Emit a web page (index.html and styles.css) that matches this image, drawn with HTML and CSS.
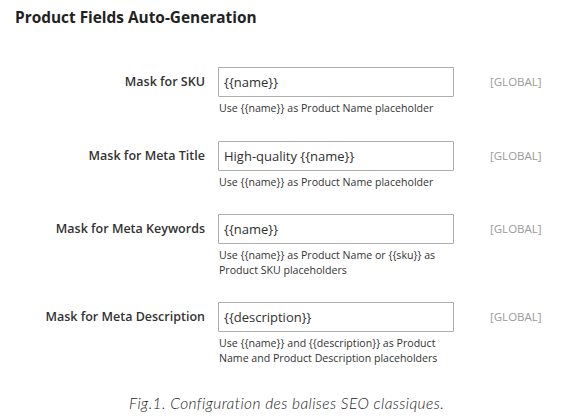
FILE: index.html
```html
<!DOCTYPE html>
<html lang="en">
<head>
<meta charset="UTF-8" />
<meta name="viewport" content="width=device-width, initial-scale=1" />
<title>Product Fields Auto-Generation</title>
<link rel="stylesheet" href="styles.css">
</head>
<body>

<section class="config-panel">
  <h2 class="panel-title">Product Fields Auto-Generation</h2>

  <div class="field-list">
    <div class="field">
      <label class="field-label" for="mask-sku">Mask for SKU</label>
      <div class="field-control">
        <input type="text" id="mask-sku" value="{{name}}" />
        <p class="field-note">Use {{name}} as Product Name placeholder</p>
      </div>
      <span class="field-scope">[GLOBAL]</span>
    </div>

    <div class="field">
      <label class="field-label" for="mask-title">Mask for Meta Title</label>
      <div class="field-control">
        <input type="text" id="mask-title" value="High-quality {{name}}" />
        <p class="field-note">Use {{name}} as Product Name placeholder</p>
      </div>
      <span class="field-scope">[GLOBAL]</span>
    </div>

    <div class="field">
      <label class="field-label" for="mask-keywords">Mask for Meta Keywords</label>
      <div class="field-control">
        <input type="text" id="mask-keywords" value="{{name}}" />
        <p class="field-note">Use {{name}} as Product Name or {{sku}} as Product SKU placeholders</p>
      </div>
      <span class="field-scope">[GLOBAL]</span>
    </div>

    <div class="field">
      <label class="field-label" for="mask-description">Mask for Meta Description</label>
      <div class="field-control">
        <input type="text" id="mask-description" value="{{description}}" />
        <p class="field-note">Use {{name}} and {{description}} as Product Name and Product Description placeholders</p>
      </div>
      <span class="field-scope">[GLOBAL]</span>
    </div>
  </div>
</section>

<p class="caption">Fig.1. Configuration des balises SEO classiques.</p>

</body>
</html>
```

FILE: styles.css
```css
:root {
  --text-dark: #303030;
  --border: #adadad;
  --muted: #9a9a9a;
}
*, *::before, *::after {
  box-sizing: border-box;
}
html, body {
  margin: 0; padding: 0;
  background: #fff;
  font-family: 'Open Sans', 'Noto Sans', sans-serif;
  color: var(--text-dark);
}

/* Panel */
.config-panel {
  padding: 8px 15px 0;
}
.panel-title {
  margin: 0 0 39px;
  font-size: 15.4px;
  line-height: 20px;
  font-weight: 700;
  color: #222;
}

/* Fields */
.field-list {
  display: flex;
  flex-direction: column;
  gap: 25px;
}
.field {
  display: grid;
  grid-template-columns: 190px 236px 1fr;
  column-gap: 13px;
  align-items: start;
}
.field-label {
  text-align: right;
  font-size: 12.5px;
  font-weight: 600;
  line-height: 30px;
  color: #333;
}
.field-control input {
  display: block;
  width: 100%;
  height: 30px;
  padding: 0 5px;
  border: 1px solid var(--border);
  border-radius: 1px;
  font-family: inherit;
  font-size: 13px;
  color: var(--text-dark);
  background: #fff;
}
.field-note {
  margin: 4px 0 0;
  padding-left: 1px;
  font-size: 10.6px;
  line-height: 14.5px;
  color: #333;
}
.field-scope {
  padding-left: 23px;
  font-size: 11.5px;
  line-height: 30px;
  color: var(--muted);
}

/* Caption */
.caption {
  margin: 29px 0 0;
  text-align: center;
  font-family: Lato, 'Open Sans', sans-serif;
  font-style: italic;
  font-weight: 300;
  font-size: 15.5px;
  letter-spacing: 0.4px;
  color: #222;
}
```
